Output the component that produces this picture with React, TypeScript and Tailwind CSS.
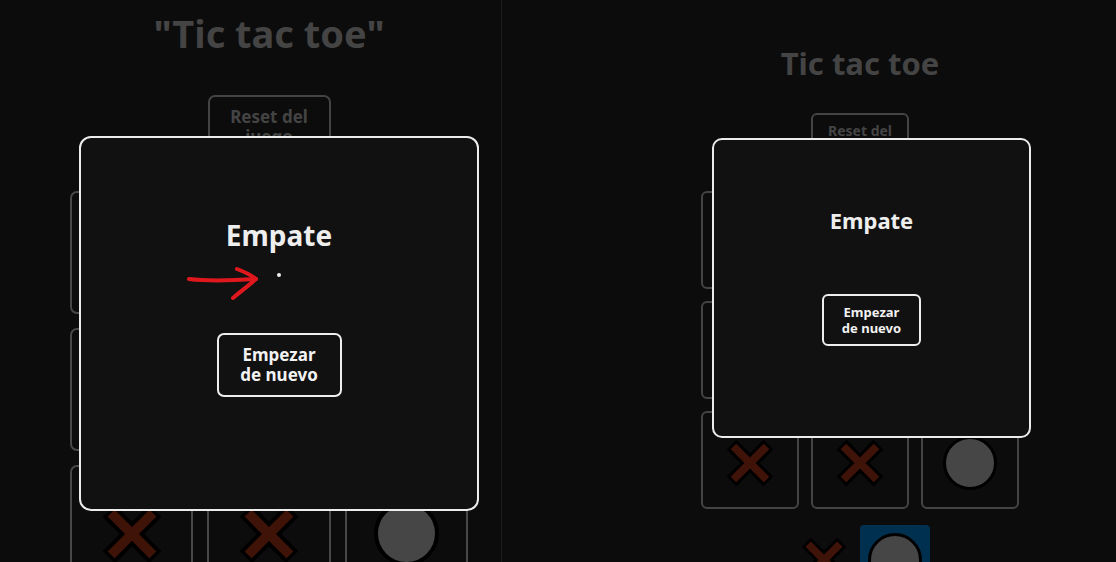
import React from "react";

type Mark = "X" | "O";

function XMark({ size }: { size: number }) {
  return (
    <svg width={size} height={size} viewBox="0 0 100 100" style={{ overflow: "visible" }}>
      <line x1="10" y1="10" x2="90" y2="90" stroke="#000" strokeWidth="30" strokeLinecap="butt" />
      <line x1="90" y1="10" x2="10" y2="90" stroke="#000" strokeWidth="30" strokeLinecap="butt" />
      <line x1="14" y1="14" x2="86" y2="86" stroke="#401309" strokeWidth="17" strokeLinecap="butt" />
      <line x1="86" y1="14" x2="14" y2="86" stroke="#401309" strokeWidth="17" strokeLinecap="butt" />
    </svg>
  );
}

const board: Mark[] = ["X", "O", "X", "O", "O", "X", "X", "X", "O"];

const font = "font-['Noto_Sans',sans-serif]";

export default function App() {
  return (
    <div className={`flex w-[1116px] h-[562px] overflow-hidden bg-[#0c0c0c] ${font}`}>
      {/* Left panel (125%) */}
      <div className="relative w-[501px] h-[562px] overflow-hidden shrink-0">
        <div className="ml-[70px] w-[398px] flex flex-col items-center">
          <h1 className="mt-[7px] text-[38px] leading-[52px] font-bold text-[#444444] whitespace-nowrap">
            "Tic tac toe"
          </h1>
          <button className="mt-[36px] w-[123px] border-2 border-[#444444] rounded-[7px] px-[14px] py-[10px] text-[17px] leading-[20px] font-bold text-[#444444]">
            Reset del juego
          </button>
          <div className="mt-[32px] w-[398px] grid grid-cols-3 gap-x-[14px] gap-y-[14px]">
            {board.map((m, i) => (
              <div
                key={i}
                className="h-[123px] border-2 border-[#484848] rounded-[7px] flex items-center justify-center pt-[14px]"
              >
                {m === "X" ? (
                  <XMark size={58} />
                ) : (
                  <div className="w-[65px] h-[65px] rounded-full bg-[#464646] border-[4px] border-black" />
                )}
              </div>
            ))}
          </div>
        </div>

        {/* Modal */}
        <div className="absolute left-[79px] top-[136px] w-[400px] h-[375px] rounded-[12px] border-2 border-[#ececec] bg-[#111111] flex flex-col items-center">
          <div className="mt-[80px] text-[28px] leading-[34px] font-bold text-[#eeeeee]">Empate</div>
          <div className="mt-[21px] w-[4px] h-[4px] rounded-full bg-[#eeeeee]" />
          <button className="mt-[56px] w-[125px] h-[64px] border-2 border-[#eeeeee] rounded-[7px] px-[18px] text-center text-[17px] leading-[20px] font-bold text-[#f2f2f2]">
            Empezar de nuevo
          </button>
        </div>

        {/* Red annotation arrow */}
        <svg className="absolute left-0 top-0" width="501" height="562">
          <path
            d="M189 279 C 205 281, 225 281, 256 279"
            fill="none"
            stroke="#e0181e"
            strokeWidth="4"
            strokeLinecap="round"
          />
          <path
            d="M237 269 C 245 272, 251 275, 256 279 C 248 286, 240 292, 233 298"
            fill="none"
            stroke="#e0181e"
            strokeWidth="4"
            strokeLinecap="round"
            strokeLinejoin="round"
          />
        </svg>
      </div>

      {/* Divider */}
      <div className="w-px h-[562px] bg-[#1d1d1d] shrink-0" />

      {/* Right panel (100%) */}
      <div className="relative flex-1 h-[562px] overflow-hidden">
        <div className="ml-[199px] w-[318px] flex flex-col items-center">
          <h1 className="mt-[43px] text-[31px] leading-[40px] font-bold text-[#444444] whitespace-nowrap">
            Tic tac toe
          </h1>
          <button className="mt-[30px] w-[98px] border-2 border-[#444444] rounded-[6px] px-[10px] py-[8px] text-[14px] leading-[16px] font-bold text-[#444444]">
            Reset del juego
          </button>
          <div className="mt-[26px] w-[318px] grid grid-cols-3 gap-x-[12px] gap-y-[12px]">
            {board.map((m, i) => (
              <div
                key={i}
                className="h-[98px] border-2 border-[#444444] rounded-[6px] flex items-center justify-center pt-[6px]"
              >
                {m === "X" ? (
                  <XMark size={46} />
                ) : (
                  <div className="w-[54px] h-[54px] rounded-full bg-[#464646] border-[3px] border-black" />
                )}
              </div>
            ))}
          </div>
          <div className="mt-[16px] self-start ml-[100px] flex items-center gap-[13px]">
            <div className="w-[46px] h-[70px] flex items-center justify-center">
              <XMark size={44} />
            </div>
            <div className="w-[70px] h-[70px] rounded-[4px] bg-[#00304f] flex items-center justify-center">
              <div className="w-[54px] h-[54px] rounded-full bg-[#464646] border-[3px] border-black" />
            </div>
          </div>
        </div>

        {/* Modal */}
        <div className="absolute left-[210px] top-[138px] w-[319px] h-[300px] rounded-[10px] border-2 border-[#ececec] bg-[#111111] flex flex-col items-center">
          <div className="mt-[66px] text-[22px] leading-[28px] font-bold text-[#eeeeee]">Empate</div>
          <button className="mt-[60px] w-[99px] h-[52px] border-2 border-[#eeeeee] rounded-[6px] px-[14px] text-center text-[13px] leading-[16px] font-bold text-[#f2f2f2]">
            Empezar de nuevo
          </button>
        </div>
      </div>
    </div>
  );
}
